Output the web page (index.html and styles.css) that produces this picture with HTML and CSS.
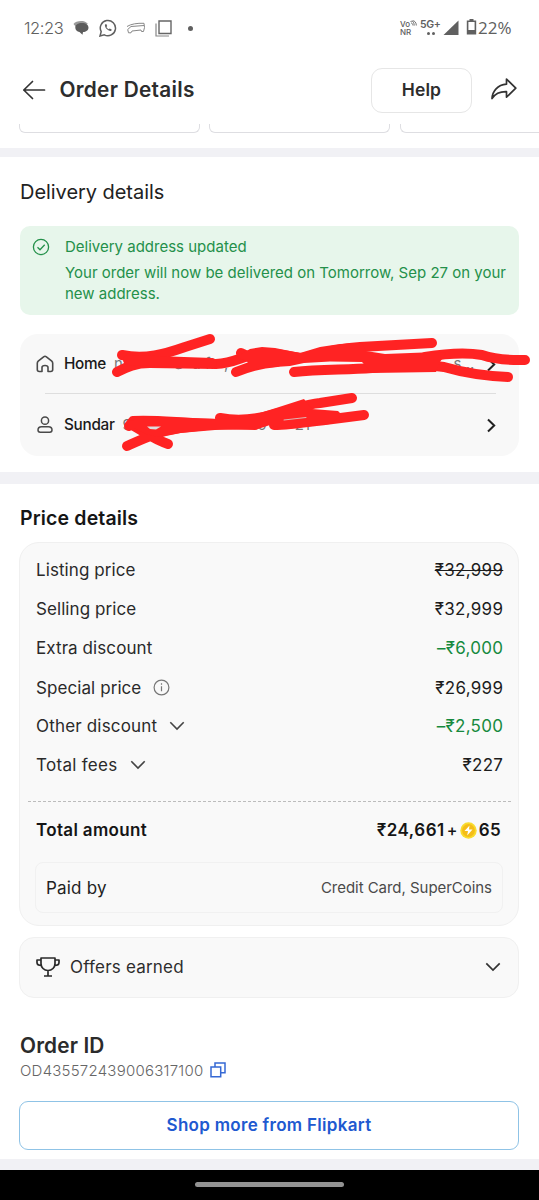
FILE: index.html
```html
<!DOCTYPE html>
<html lang="en">
<head>
<meta charset="utf-8">
<title>Order Details</title>
<link rel="stylesheet" href="styles.css">
</head>
<body>
<div class="statusbar">
  <span class="clock">12:23</span>
  <svg class="i-chat" width="17" height="16" viewBox="0 0 17 16"><path d="M0.500 4C2 1 10 0 13 2.200L15 4 3 7Z" fill="#999"/><path d="M9 3c4 0 6.500 2 6.500 4.700 0 2.400-2.500 4.300-5.500 4.300l-.5 2.800L6.500 12C4 11.500 2.300 9.800 2.300 7.700 2.300 5 5 3 9 3Z" fill="#5c5c5c"/></svg>
  <svg class="i-wa" width="18" height="18" viewBox="0 0 18 18" fill="none" stroke="#606060" stroke-width="1.500"><path d="M1 17l1.200-4.300A7.600 7.600 0 1 1 5.300 15.800Z"/><path d="M6 5.500c-.8 2.800 3.200 7 6.200 6.400l.5-1.500-2-1-1 .8c-1-.4-1.800-1.200-2.200-2.200l.7-1L7.300 5Z" fill="#606060" stroke="none"/></svg>
  <svg class="i-car" width="20" height="12" viewBox="0 0 20 12" fill="none" stroke="#888" stroke-width="1" stroke-linejoin="round"><path d="M1 4.500C5 2 11 1 18 1.300L18.500 5.500 17.500 9.500 15.500 9.500 15 8 6 9 5 10.800 2.500 10.800 1.700 7.500 5 4.500 18 3.500"/></svg>
  <svg class="i-sq" width="17" height="17" viewBox="0 0 17 17" fill="none" stroke="#666"><path d="M4 1h12v12.500H4Z" stroke-width="1.400"/><path d="M1 3.500V16h13" stroke-width="1.200" stroke="#888"/></svg>
  <span class="dot"></span>
  <span class="grow"></span>
  <span class="vo"><b>Vo<svg width="7" height="6" viewBox="0 0 7 6" fill="none" stroke="#606060" stroke-width=".9"><path d="M.5 1.500C3 .5 4 2.500 4.300 5.500M2.500 .8C5 .5 6.300 3 6.300 5.500M1 3c1.200 0 1.800 1 2 2.500"/></svg></b><b>NR</b></span>
  <span class="net"><b>5G+</b><i></i><i></i></span>
  <svg class="i-sig" width="16" height="16" viewBox="0 0 16 16"><path d="M15.500 .5V15H.5Z" fill="#606060"/></svg>
  <svg class="i-bat" width="11" height="18" viewBox="0 0 11 18"><path d="M3.500 1h4v2h-4z" fill="#606060"/><path d="M1.600 3.200h7.800v12.600H1.600Z" fill="none" stroke="#606060" stroke-width="1.600"/><path d="M1.500 12h8v4h-8z" fill="#606060"/></svg>
  <span class="pct">22%</span>
</div>
<header class="header">
  <svg width="24" height="20" viewBox="0 0 24 20" fill="none" stroke="#333" stroke-width="1.700" stroke-linecap="round" stroke-linejoin="round"><path d="M22.500 10H1.800M10.500 1.500L1.800 10 10.500 18.500"/></svg>
  <h1>Order Details</h1>
  <span class="grow"></span>
  <button class="help">Help</button>
  <svg class="share" width="28" height="24" viewBox="0 0 28 24" fill="none" stroke="#333" stroke-width="1.700" stroke-linejoin="round"><path d="M16.500 2l9.300 9.200-9.300 9v-5.500C10 14.500 5 17 2 21.500 2.500 14 7.500 8 16.500 7.200Z"/></svg>
</header>
<div class="stubs"><i></i><i></i><i></i></div>
<div class="band band-top"></div>

<section class="delivery">
  <h2>Delivery details</h2>
  <div class="notice">
    <svg width="18" height="18" viewBox="0 0 18 18" fill="none" stroke="#24904a" stroke-width="1.300"><circle cx="9" cy="9" r="7.600"/><path d="M5.500 9.200l2.500 2.500 4.700-4.900"/></svg>
    <div>
      <p class="notice-title">Delivery address updated</p>
      <p class="notice-text">Your order will now be delivered on Tomorrow, Sep 27 on your<br>new address.</p>
    </div>
  </div>
  <div class="address">
    <div class="arow">
      <svg width="18" height="18" viewBox="0 0 18 18" fill="none" stroke="#4a4a4a" stroke-width="1.600" stroke-linejoin="round"><path d="M1.300 8.200Q1.300 7 2.200 6.200L7.600 1.800Q9 .8 10.400 1.800L15.800 6.200Q16.700 7 16.700 8.200V14.500Q16.700 16.500 14.700 16.500H12V12.500Q12 10.500 9 10.500T6 12.500V16.500H3.300Q1.300 16.500 1.300 14.500Z"/></svg>
      <b>Home</b>
      <span class="hid"><span>n</span><span class="h2">S</span><span class="h3">d fl</span><span class="h4">,</span><span class="h5">s...</span></span>
      <span class="grow"></span>
      <svg class="go" width="9" height="15" viewBox="0 0 9 15" fill="none" stroke="#222" stroke-width="2"><path d="M1 1.500l6.200 6L1 13.500"/></svg>
    </div>
    <hr>
    <div class="arow arow2">
      <svg width="18" height="18" viewBox="0 0 18 18" fill="none" stroke="#4a4a4a" stroke-width="1.500"><circle cx="9" cy="4.700" r="3.600"/><path d="M5.500 10.700h7c2 0 3.500 1.500 3.500 3.400 0 1.300-.9 2.100-2.200 2.100H4.200C2.900 16.200 2 15.400 2 14.100c0-1.900 1.500-3.400 3.500-3.400Z"/></svg>
      <b>Sundar</b>
      <span class="hid"><span>9</span><span class="h6">0</span><span class="h7">0</span><span class="h8">21</span></span>
      <span class="grow"></span>
      <svg class="go" width="9" height="15" viewBox="0 0 9 15" fill="none" stroke="#222" stroke-width="2"><path d="M1 1.500l6.200 6L1 13.500"/></svg>
    </div>
    <svg class="scribble" width="539" height="130" viewBox="0 330 539 130" fill="none" stroke="#ff2323" stroke-width="10" stroke-linecap="round" stroke-linejoin="round">
      <path d="M122 355C145 360 165 354 185 347L210 339"/>
      <path d="M117 372C127 367 135 363 150 363L216 364C236 363 243 355 262 353 280 353 290 357 302 358 320 353 345 348 360 347L432 343"/>
      <path d="M128 360L212 363"/>
      <path d="M236 372C250 366 263 363 277 362M241 353L252 358"/>
      <path d="M294 372C320 369 345 370 372 368 400 364 430 365 444 367 468 374 485 376 508 377"/>
      <path d="M425 357C455 352 470 353 482 355 500 361 515 360 525 360"/>
      <path d="M236 357L250 349 262 347 275 348 300 353 320 347 340 344 362 343 366 351 385 354 436 352 446 353 440 362 436 372 372 373 362 362 330 361.500 304 363 290 366 275 367 262 368 240 372 248 362Z" fill="#ff2323" stroke="none"/>
      <path d="M129 426L133 421C155 419 185 424 218 424L255 425"/>
      <path d="M127 446C145 438 160 431 180 428L215 424M132 425C148 434 153 439 168 444"/>
      <path d="M220 418C235 421 255 420 275 414 290 411 305 404 320 403L352 398"/>
      <path d="M274 425C292 425 315 421 325 420L364 415"/>
      <path d="M134 416L218 419 250 416 276 408 304 399 312 409 338 411 342 415 330 424 285 429 270 425 258 429 215 430 180 433 158 437 146 434 134 428Z" fill="#ff2323" stroke="none"/>
      <path d="M147 426.500L161 426.500 156 429.500 150 429Z" fill="#ddd" stroke="none"/>
      <path d="M284 420L306 417.500" stroke="#ddb5b5" stroke-width="1"/>
    </svg>
  </div>
</section>
<div class="band band-mid"></div>

<section class="price">
  <h2>Price details</h2>
  <div class="card">
    <div class="prow"><span>Listing price</span><span class="amt struck">₹32,999</span></div>
    <div class="prow"><span>Selling price</span><span class="amt">₹32,999</span></div>
    <div class="prow"><span>Extra discount</span><span class="amt green">–₹6,000</span></div>
    <div class="prow p4"><span>Special price</span><svg width="17" height="17" viewBox="0 0 17 17" fill="none" stroke="#777" stroke-width="1.200"><circle cx="8.500" cy="8.500" r="7.400"/><path d="M8.500 7.300v5M8.500 4.300v1.500"/></svg><span class="amt">₹26,999</span></div>
    <div class="prow p5"><span>Other discount</span><svg width="16" height="10" viewBox="0 0 16 10" fill="none" stroke="#444" stroke-width="1.600"><path d="M1.300 1.300L8 8l6.700-6.700"/></svg><span class="amt green">–₹2,500</span></div>
    <div class="prow p6"><span>Total fees</span><svg width="16" height="10" viewBox="0 0 16 10" fill="none" stroke="#444" stroke-width="1.600"><path d="M1.300 1.300L8 8l6.700-6.700"/></svg><span class="amt">₹227</span></div>
    <div class="dash"></div>
    <div class="total"><span>Total amount</span><span class="sum">₹24,661</span><span class="plus">+</span><svg width="17" height="17" viewBox="0 0 17 17"><circle cx="8.500" cy="8.500" r="8.200" fill="#f9dc2e"/><circle cx="8.500" cy="8.500" r="6.400" fill="#f5bd18"/><path d="M9.500 3.500L4.500 9h3.500l-.8 4.500L12.500 7.500H9Z" fill="#fff"/></svg><span class="coins">65</span></div>
    <div class="paid"><span>Paid by</span><span class="method">Credit Card, SuperCoins</span></div>
  </div>
  <div class="offers">
    <svg width="24" height="20" viewBox="0 0 24 20" fill="none" stroke="#2b2b2b" stroke-width="1.700" stroke-linejoin="round"><path d="M5 1h14v5.500c0 4-3 7-7 7S5 10.500 5 6.500ZM5 3H1v2.500C1 7.500 2.500 8.500 5.500 8.500M19 3h4v2.500c0 2-1.500 3-4.500 3M12 13.500V19M8 19h8"/></svg>
    <span>Offers earned</span>
    <span class="grow"></span>
    <svg width="16" height="10" viewBox="0 0 16 10" fill="none" stroke="#333" stroke-width="1.700"><path d="M1.300 1.300L8 8l6.700-6.700"/></svg>
  </div>
  <h3>Order ID</h3>
  <div class="oid"><span>OD435572439006317100</span><svg width="16" height="16" viewBox="0 0 16 16" fill="none" stroke="#3568d4" stroke-width="1.500"><path d="M1 5h9.700v9.800H1Z"/><path d="M5 5V1h10v9.700h-4"/></svg></div>
  <button class="shop">Shop more from Flipkart</button>
</section>
<div class="band band-bottom"></div>
<div class="nav"><i></i></div>
</body>
</html>
```
FILE: styles.css
```css
* { box-sizing: border-box; }
body { margin: 0; width: 539px; height: 1200px; overflow: hidden; background: #fff; font-family: Inter, "Noto Sans", sans-serif; color: #222; }
h1, h2, h3, p { margin: 0; }
svg { display: block; flex: none; }
button { font-family: inherit; background: #fff; padding: 0; }
.grow { flex: 1; }

.statusbar { height: 56px; padding: 0 25px 0 24px; display: flex; align-items: center; color: #606060; }
.clock { width: 40px; font-size: 16.5px; font-weight: 300; letter-spacing: -0.4px; white-space: nowrap; }
.i-chat { margin-left: 9px; }
.i-wa { margin-left: 9px; }
.i-car { margin-left: 9px; }
.i-sq { margin-left: 9px; }
.dot { width: 5px; height: 5px; border-radius: 50%; background: #606060; margin-left: 16px; }
.vo { display: flex; flex-direction: column; width: 18px; font-size: 8px; line-height: 8px; white-space: nowrap; }
.vo b { display: flex; font-weight: 500; }
.net { display: flex; flex-wrap: wrap; justify-content: center; gap: 1px 2px; width: 21px; margin: -2px 0 0 2px; }
.net b { width: 21px; font-size: 10.5px; line-height: 12px; font-weight: 600; letter-spacing: -0.4px; }
.net i { width: 3px; height: 3px; border-radius: 50%; background: #606060; }
.i-sig { margin-left: 2px; }
.i-bat { margin-left: 7px; margin-top: -2px; }
.pct { margin-left: 1px; font-family: "Open Sans", sans-serif; font-weight: 400; font-size: 17px; width: 36px; line-height: 20px; margin-top: -1px; }

.header { height: 68px; padding: 0 21px 0 22px; display: flex; align-items: center; }
.header h1 { margin: -1px 0 0 13.5px; font-size: 20.8px; font-weight: 600; letter-spacing: 0.27px; color: #2d2d2d; }
.help { width: 101px; height: 45px; padding-bottom: 2px; border: 1px solid #e6e6e6; border-radius: 11px; font-size: 17.5px; font-weight: 600; letter-spacing: 0.1px; color: #2d2d2d; }
.share { margin-left: 18px; margin-top: -3px; }
.stubs { height: 24px; padding-left: 19px; display: flex; gap: 9px; overflow: hidden; }
.stubs i { flex: none; width: 181px; height: 9px; border: 1px solid #dedee2; border-top: 0; border-radius: 0 0 6px 6px; }
.stubs i:last-child { flex: 1; margin-left: 1px; border-right: 0; border-bottom-right-radius: 0; }
.band { background: #f1f1f5; }
.band-top { height: 9px; }
.band-mid { height: 12px; }
.band-bottom { height: 11px; }

.delivery { height: 315px; padding: 23px 20px 0; }
.delivery h2 { font-size: 20px; line-height: 24px; font-weight: 400; letter-spacing: -0.05px; }
.notice { height: 89px; margin-top: 22px; border-radius: 10px; background: #e7f6eb; padding: 11px 12px; display: flex; gap: 15px; color: #24904a; }
.notice svg { margin-top: 1px; }
.notice p { font-size: 15px; line-height: 21px; white-space: nowrap; }
.notice-title { margin-top: -1px; }
.notice-text { margin-top: 5px; }
.address { position: relative; height: 122px; margin-top: 19px; border-radius: 18px; background: #f8f8f8; padding: 0 23px 0 16px; }
.arow { height: 59px; display: flex; align-items: center; font-size: 15.3px; color: #1a1a1a; }
.arow b { margin-left: 10px; font-weight: 500; letter-spacing: -0.3px; }
.go { margin-top: 2px; }
.address hr { margin: 0 0 2px 9px; border: 0; height: 1px; background: #dedede; }
.arow2 { height: 57px; }
.hid { display: flex; margin-left: 8px; font-size: 15px; color: #777; white-space: nowrap; }
.hid .h2 { margin-left: 51px; }
.hid .h3 { margin-left: 8px; }
.hid .h4 { margin-left: 10px; }
.hid .h5 { margin-left: 225px; }
.hid .h6 { margin-left: 18px; }
.hid .h7 { margin-left: 98px; }
.hid .h8 { margin-left: 28px; }
.scribble { position: absolute; left: -20px; top: -4px; }

.price { height: 675px; padding: 22px 20px 0; }
.price h2 { font-size: 19.5px; line-height: 25px; font-weight: 600; letter-spacing: 0.15px; color: #151515; }
.card { height: 384px; margin: 11px 0 0 -1px; width: 500px; border: 1px solid #f0f0f0; border-radius: 20px; background: #f9f9f9; padding: 7px 15px 0 16px; }
.prow { height: 39.3px; display: flex; align-items: center; font-size: 17px; letter-spacing: 0.08px; color: #2a2a2a; }
.prow svg { margin-left: 11.5px; }
.prow.p5 { height: 38px; letter-spacing: 0.18px; }
.prow.p6 { letter-spacing: 0.3px; }
.prow.p6 svg { margin-left: 12.5px; }
.amt { margin-left: auto; letter-spacing: 0.3px; margin-right: -0.3px; color: #1d1d1d; }
.green { color: #168a3e; }
.struck { text-decoration: line-through; }
.dash { margin: 17px -8px 0; border-top: 1px dashed #bcbcbc; }
.total { height: 56px; display: flex; align-items: center; padding-right: 2px; font-size: 17px; font-weight: 600; letter-spacing: 0.33px; color: #151515; }
.sum { margin-left: auto; letter-spacing: 0.5px; }
.plus { margin: 0 2px 0 2px; font-weight: 500; font-size: 16px; }
.coins { margin-left: 2px; }
.paid { height: 51px; margin: 4px 0 0 -1px; border: 1px solid #f1f1f1; border-radius: 8px; padding: 0 10px; display: flex; align-items: center; justify-content: space-between; font-size: 17px; letter-spacing: 0.2px; color: #222; }
.method { font-size: 15px; letter-spacing: -0.04px; color: #4a4a4a; }
.offers { height: 61px; width: 500px; margin: 11px 0 0 -1px; border: 1px solid #f0f0f0; border-radius: 15px; background: #f9f9f9; display: flex; align-items: center; padding: 0 17px 2px 16px; font-size: 17px; letter-spacing: 0.2px; color: #2d2d2d; }
.offers span:first-of-type { margin-left: 10px; }
.price h3 { margin-top: 36px; font-size: 20.8px; line-height: 24px; font-weight: 600; letter-spacing: 0.15px; color: #2b2b2b; }
.oid { display: flex; align-items: center; height: 25px; padding-bottom: 1px; font-size: 15px; font-weight: 300; letter-spacing: 0.23px; color: #666; }
.oid svg { margin-left: 7px; }
.shop { display: block; width: 500px; height: 49px; margin: 18px 0 0 -1px; padding-bottom: 2px; border: 1px solid #8fc3e6; border-radius: 9px; font-size: 17px; font-weight: 600; letter-spacing: 0.3px; color: #2059d0; }
.nav { height: 30px; background: #000; display: flex; justify-content: center; padding-top: 12px; }
.nav i { width: 149px; height: 5px; border-radius: 3px; background: #929292; }
```
